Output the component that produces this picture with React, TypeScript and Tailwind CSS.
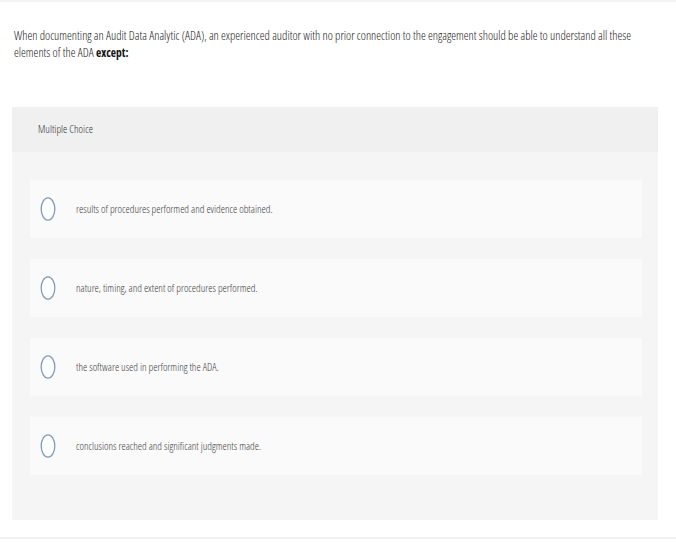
const font = { fontFamily: '"Open Sans", "Liberation Sans", sans-serif', fontStretch: 'condensed' as const };

const options = [
  'results of procedures performed and evidence obtained.',
  'nature, timing, and extent of procedures performed.',
  'the software used in performing the ADA.',
  'conclusions reached and significant judgments made.',
];

function Radio() {
  return (
    <svg width="16" height="26" viewBox="0 0 16 26" className="shrink-0">
      <ellipse cx="8" cy="13" rx="6.8" ry="11.2" fill="#ffffff" stroke="#7f9bbb" strokeWidth="1.3" />
    </svg>
  );
}

export default function App() {
  return (
    <div className="w-[676px] h-[542px] bg-white overflow-hidden flex flex-col" style={font}>
      <div className="h-[2px] bg-[#f3f3f3] shrink-0" />
      <div className="pl-[14px] pr-[24px] pt-[25px] text-[12.2px] leading-[17px] font-light text-[#222]">
        When documenting an Audit Data Analytic (ADA), an experienced auditor with no prior connection to the engagement should be able to understand all these elements of the ADA <span className="font-bold text-[11.5px] text-[#111]">except:</span>
      </div>
      <div className="ml-[12px] mr-[18px] mt-[46px] bg-[#f5f5f5] pb-[45px]">
        <div className="h-[45px] bg-[#f0f0f0] flex items-center pl-[26px] text-[10.8px] font-light text-[#333]">
          Multiple Choice
        </div>
        <div className="flex flex-col gap-[21px] pt-[28px] pl-[18px] pr-[16px]">
          {options.map((o) => (
            <div key={o} className="h-[58px] bg-[#fafafa] flex items-center pl-[10px]">
              <Radio />
              <span className="ml-[20px] text-[10.7px] font-light text-[#3d3d3d]">{o}</span>
            </div>
          ))}
        </div>
      </div>
      <div className="flex-1" />
      <div className="h-[2px] bg-[#f1f1f1] shrink-0 mb-[3px]" />
    </div>
  );
}
